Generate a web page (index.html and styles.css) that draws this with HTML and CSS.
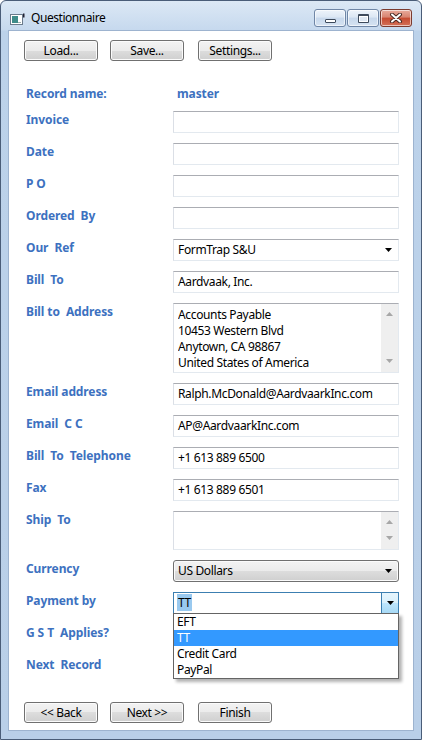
FILE: index.html
```html
<!DOCTYPE html>
<html>
<head>
<meta charset="utf-8">
<link rel="stylesheet" href="styles.css">
</head>
<body>
<div class="window">
  <div class="titlebar">
    <svg class="appicon" width="15" height="12" viewBox="0 0 15 12">
      <rect x="0.5" y="1.5" width="12" height="10" fill="#fff" stroke="#6b7b8c"/>
      <rect x="2" y="3" width="6" height="7" fill="#3f8c8a"/>
      <rect x="8" y="9" width="3" height="1" fill="#9aa"/>
      <rect x="13" y="0.5" width="1.5" height="4" fill="#223"/>
    </svg>
    <span class="title">Questionnaire</span>
    <div class="caption">
      <div class="cbtn"><span class="g-min"></span></div>
      <div class="cbtn"><span class="g-max"></span></div>
      <div class="cbtn close">
        <svg width="14" height="10" viewBox="0 0 14 10">
          <path d="M3 1.5L11 8.5M11 1.5L3 8.5" stroke="#4a2a24" stroke-width="4" stroke-linecap="round"/>
          <path d="M3 1.5L11 8.5M11 1.5L3 8.5" stroke="#fff" stroke-width="2" stroke-linecap="round"/>
        </svg>
      </div>
    </div>
  </div>
  <div class="client">
    <div class="btnrow">
      <button class="btn">Load...</button>
      <button class="btn">Save...</button>
      <button class="btn wide">Settings...</button>
    </div>
    <div class="form">
      <div class="label rec">Record name:</div><div class="label rec value">master</div>

      <div class="label">Invoice</div><div class="field"></div>
      <div class="label">Date</div><div class="field"></div>
      <div class="label">P O</div><div class="field"></div>
      <div class="label">Ordered  By</div><div class="field"></div>
      <div class="label">Our  Ref</div>
      <div class="field combo"><span class="txt">FormTrap S&amp;U</span><svg class="arr" width="7" height="4" viewBox="0 0 7 4"><path d="M0 0H7L3.5 4Z" fill="#000"/></svg></div>
      <div class="label">Bill  To</div><div class="field"><span class="txt">Aardvaak, Inc.</span></div>
      <div class="label">Bill to  Address</div>
      <div class="field area addr">
        <div class="atext">Accounts Payable<br>10453 Western Blvd<br>Anytown, CA 98867<br>United States of America</div>
        <div class="vscroll">
          <svg width="7" height="4" viewBox="0 0 7 4"><path d="M0 4H7L3.5 0Z" fill="#a7a7a7"/></svg>
          <svg width="7" height="4" viewBox="0 0 7 4"><path d="M0 0H7L3.5 4Z" fill="#a7a7a7"/></svg>
        </div>
      </div>
      <div class="label">Email address</div><div class="field"><span class="txt">Ralph.McDonald@AardvaarkInc.com</span></div>
      <div class="label">Email  C C</div><div class="field"><span class="txt">AP@AardvaarkInc.com</span></div>
      <div class="label">Bill  To  Telephone</div><div class="field"><span class="txt">+1 613 889 6500</span></div>
      <div class="label">Fax</div><div class="field"><span class="txt">+1 613 889 6501</span></div>
      <div class="label">Ship  To</div>
      <div class="field area ship">
        <div class="atext"></div>
        <div class="vscroll">
          <svg width="7" height="4" viewBox="0 0 7 4"><path d="M0 4H7L3.5 0Z" fill="#a7a7a7"/></svg>
          <svg width="7" height="4" viewBox="0 0 7 4"><path d="M0 0H7L3.5 4Z" fill="#a7a7a7"/></svg>
        </div>
      </div>
      <div class="label">Currency</div>
      <div class="field dropbtn"><span class="txt">US Dollars</span><svg class="arr" width="7" height="4" viewBox="0 0 7 4"><path d="M0 0H7L3.5 4Z" fill="#000"/></svg></div>
      <div class="label">Payment by</div>
      <div class="field payment">
        <span class="txt"><span class="sel">TT</span></span>
        <div class="pbtn"><svg width="7" height="4" viewBox="0 0 7 4"><path d="M0 0H7L3.5 4Z" fill="#000"/></svg></div>
        <div class="dropdown">
          <div class="item">EFT</div>
          <div class="item active">TT</div>
          <div class="item">Credit Card</div>
          <div class="item">PayPal</div>
        </div>
      </div>
      <div class="label">G S T  Applies?</div><div class="blank"></div>
      <div class="label">Next  Record</div><div class="blank"></div>
    </div>
    <div class="btnrow footer">
      <button class="btn">&lt;&lt; Back</button>
      <button class="btn">Next &gt;&gt;</button>
      <button class="btn wide">Finish</button>
    </div>
  </div>
</div>
</body>
</html>
```
FILE: styles.css
```css
* { box-sizing: border-box; }
body {
  margin: 0;
  font-family: "Noto Sans", "DejaVu Sans", sans-serif;
  font-size: 12px;
  letter-spacing: -0.35px;
  background: #fff;
}
.window {
  width: 422px;
  height: 740px;
  border: 1px solid #4a5d78;
  border-radius: 6px 6px 0 0;
  background: linear-gradient(#dce8f5, #c6d9ee 29px, #bcd2ea 30px, #b9cfe8);
  display: flex;
  flex-direction: column;
  overflow: hidden;
}
.titlebar {
  height: 29px;
  flex: none;
  display: flex;
  align-items: center;
  padding: 0 9px 0 9px;
}
.appicon { flex: none; margin-top: 6px; }
.title {
  margin-left: 6px;
  margin-top: 4px;
  font-size: 12px;
  letter-spacing: -0.45px;
  color: #000;
}
.caption {
  margin-left: auto;
  align-self: flex-start;
  margin-top: 8px;
  display: flex;
  gap: 1px;
}
.cbtn {
  width: 32px;
  height: 18px;
  border: 1px solid #6f86a6;
  border-radius: 3px;
  background: linear-gradient(#eef4fb, #dce7f4 45%, #c7d8ec 50%, #d6e3f2);
  box-shadow: inset 0 0 0 1px rgba(255,255,255,0.6);
  display: flex;
  align-items: center;
  justify-content: center;
}
.cbtn.close {
  background: linear-gradient(#e9ab9c, #d88470 45%, #c54a30 50%, #d47158);
  border-color: #7b3b2f;
}
.g-min {
  width: 11px;
  height: 4px;
  margin-top: 5px;
  border: 1px solid #3d4a5c;
  border-radius: 1px;
  background: #fff;
}
.g-max {
  width: 11px;
  height: 9px;
  border: 1px solid #3d4a5c;
  border-top-width: 2px;
  border-radius: 1px;
  background: #dfe8f3;
  box-shadow: inset 0 0 0 1px #fff;
}
.client {
  margin: 0 7px;
  height: 701px;
  flex: none;
  background: #fff;
  border: 1px solid #9db3cf;
  display: flex;
  flex-direction: column;
  padding: 9px 0 7px 0;
}
.btnrow {
  display: flex;
  gap: 12px;
  padding-left: 15px;
}
.btnrow .wide { margin-left: 2px; }
.footer { margin-top: auto; }
.btn {
  width: 74px;
  height: 21px;
  padding: 0;
  border: 1px solid #707070;
  border-radius: 3px;
  background: linear-gradient(#f3f3f3, #ebebeb 50%, #dddddd 50%, #cfcfcf);
  box-shadow: inset 0 0 0 1px #fbfbfb;
  font-family: "Noto Sans", "DejaVu Sans", sans-serif;
  font-size: 12px;
  letter-spacing: -0.35px;
  color: #000;
}
.form {
  display: grid;
  grid-template-columns: 147px 226px;
  row-gap: 10px;
  margin-top: 26px;
  padding-left: 17px;
}
.label {
  color: #3d71c0;
  font-weight: bold;
  line-height: 16px;
  padding-top: 1px;
  letter-spacing: -0.1px;
  white-space: pre;
}
.label.rec {
  line-height: 14px;
  padding-top: 0;
}
.label.value { padding-left: 4px; }
.field {
  height: 22px;
  border: 1px solid #e3e9ef;
  border-top-color: #abadb3;
  border-left-color: #dbdfe6;
  background: #fff;
  padding: 0 0 0 4px;
  display: flex;
  align-items: center;
  color: #000;
  white-space: nowrap;
}
.txt { flex: 1; line-height: 16px; }
.arr { flex: none; margin-right: 6px; }
.field.dropbtn {
  border: 1px solid #707070;
  border-radius: 3px;
  background: linear-gradient(#f3f3f3, #ebebeb 50%, #dddddd 50%, #cfcfcf);
  box-shadow: inset 0 0 0 1px #fbfbfb;
}
.field.area {
  align-items: stretch;
  padding-right: 0;
}
.field.addr { height: 70px; }
.field.ship { height: 39px; }
.atext {
  flex: 1;
  padding-top: 3px;
  line-height: 16px;
  overflow: hidden;
}
.vscroll {
  width: 17px;
  flex: none;
  background: #efefef;
  display: flex;
  flex-direction: column;
  align-items: center;
  justify-content: space-between;
  padding: 8px 0 9px 0;
}
.field.payment {
  position: relative;
  border: 1px solid #3c7fb1;
  padding-left: 3px;
}
.sel {
  background: #99c9ef;
  padding: 0 1px;
}
.pbtn {
  width: 17px;
  height: 20px;
  flex: none;
  border: 1px solid #3c7fb1;
  border-width: 0 0 0 1px;
  background: linear-gradient(#e6f5fd, #d9f0fc 50%, #bee6fd 50%, #a7d9f5);
  display: flex;
  align-items: center;
  justify-content: center;
}
.dropdown {
  position: absolute;
  left: -1px;
  right: -1px;
  top: 20px;
  height: 66px;
  border: 1px solid #646464;
  background: #fff;
  box-shadow: 3px 3px 3px rgba(0,0,0,0.3);
  z-index: 2;
}
.item {
  height: 16px;
  line-height: 16px;
  padding-left: 3px;
}
.item.active {
  background: #3399ff;
  color: #fff;
}
.blank { height: 22px; }
```
